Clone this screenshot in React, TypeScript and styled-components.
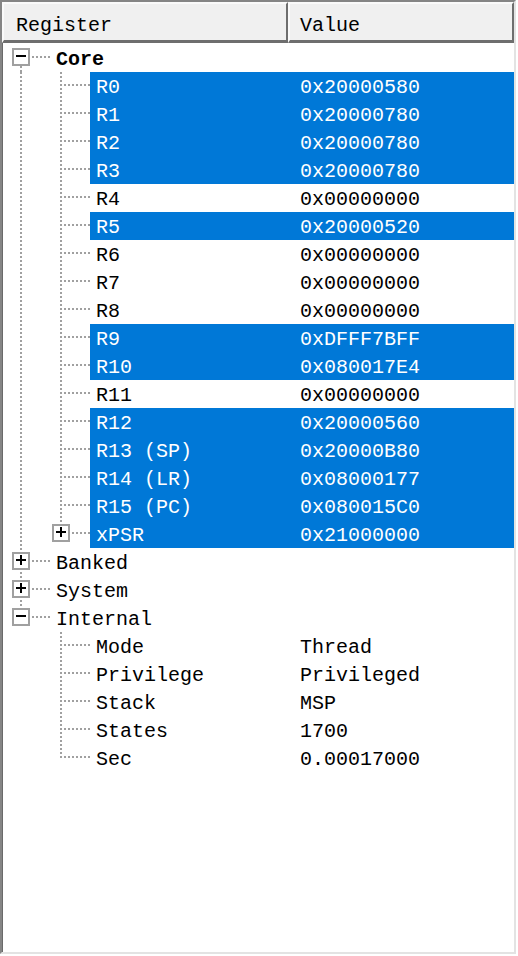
import React from "react";
import styled, { createGlobalStyle, css } from "styled-components";

const GlobalStyle = createGlobalStyle`
  html, body { margin: 0; padding: 0; background: #ffffff; }
  body { font-family: "Liberation Mono", "Noto Sans CJK SC", monospace; }
`;

type Node = {
  name: string;
  value?: string;
  bold?: boolean;
  selected?: boolean;
  expanded?: boolean;
  collapsible?: boolean;
  children?: Node[];
};

const sel = (name: string, value: string): Node => ({ name, value, selected: true });
const reg = (name: string, value: string): Node => ({ name, value });

const TREE: Node[] = [
  {
    name: "Core",
    bold: true,
    expanded: true,
    collapsible: true,
    children: [
      sel("R0", "0x20000580"),
      sel("R1", "0x20000780"),
      sel("R2", "0x20000780"),
      sel("R3", "0x20000780"),
      reg("R4", "0x00000000"),
      sel("R5", "0x20000520"),
      reg("R6", "0x00000000"),
      reg("R7", "0x00000000"),
      reg("R8", "0x00000000"),
      sel("R9", "0xDFFF7BFF"),
      sel("R10", "0x080017E4"),
      reg("R11", "0x00000000"),
      sel("R12", "0x20000560"),
      sel("R13 (SP)", "0x20000B80"),
      sel("R14 (LR)", "0x08000177"),
      sel("R15 (PC)", "0x080015C0"),
      { name: "xPSR", value: "0x21000000", selected: true, collapsible: true },
    ],
  },
  { name: "Banked", collapsible: true },
  { name: "System", collapsible: true },
  {
    name: "Internal",
    expanded: true,
    collapsible: true,
    children: [
      reg("Mode", "Thread"),
      reg("Privilege", "Privileged"),
      reg("Stack", "MSP"),
      reg("States", "1700"),
      reg("Sec", "0.00017000"),
    ],
  },
];

type Flat = {
  node: Node;
  level: number;
  guides: boolean[];
  vline: "full" | "top" | "bottom";
};

function flatten(nodes: Node[], level: number, guides: boolean[], out: Flat[]) {
  nodes.forEach((n, i) => {
    const isLast = i === nodes.length - 1;
    const isFirstRoot = level === 0 && i === 0;
    const vline = isLast ? "top" : isFirstRoot ? "bottom" : "full";
    out.push({ node: n, level, guides, vline });
    if (n.expanded && n.children) {
      flatten(n.children, level + 1, [...guides, !isLast], out);
    }
  });
  return out;
}

const DOT = "#a0a0a0";
const vDots = `repeating-linear-gradient(to bottom, ${DOT} 0 2px, transparent 2px 4px)`;
const hDots = `repeating-linear-gradient(to right, ${DOT} 0 2px, transparent 2px 4px)`;

const Panel = styled.div`
  box-sizing: border-box;
  width: 516px;
  height: 954px;
  border-top: 2px solid #858585;
  border-left: 2px solid #858585;
  border-right: 2px solid #e3e3e3;
  border-bottom: 2px solid #e3e3e3;
  display: flex;
  flex-direction: column;
  background: #ffffff;
  font-size: 20px;
  color: #000000;
`;

const HeaderBar = styled.div`
  display: flex;
  height: 41px;
`;

const HeaderCell = styled.div<{ $w?: number; $pad: number }>`
  box-sizing: border-box;
  ${(p) => (p.$w ? css`width: ${p.$w}px;` : css`flex: 1;`)}
  height: 41px;
  background: #f0f0f0;
  border-top: 2px solid #fafafa;
  border-left: 2px solid #fafafa;
  border-right: 2px solid #6e6e6e;
  border-bottom: 3px solid #6e6e6e;
  padding: 7px 0 0 ${(p) => p.$pad}px;
  line-height: 29px;
  white-space: pre;
`;

const TreeBody = styled.div`
  flex: 1;
  border-left: 1px solid #6a6a6a;
  padding-top: 1px;
  display: flex;
  flex-direction: column;
`;

const Row = styled.div`
  display: flex;
  height: 28px;
`;

const Guide = styled.div<{ $line: boolean }>`
  flex: none;
  width: 40px;
  height: 28px;
  ${(p) =>
    p.$line &&
    css`
      background-image: ${vDots};
      background-size: 2px 28px;
      background-position: 17px 0;
      background-repeat: no-repeat;
    `}
`;

const vSize = { full: "2px 28px", top: "2px 14px", bottom: "2px 14px" };
const vPos = { full: "17px 0", top: "17px 0", bottom: "17px 14px" };

const Connector = styled.div<{ $v: "full" | "top" | "bottom" }>`
  flex: none;
  box-sizing: border-box;
  width: 47px;
  height: 28px;
  padding: 4px 0 0 9px;
  background-image: ${vDots}, ${hDots};
  background-size: ${(p) => vSize[p.$v]}, 30px 2px;
  background-position: ${(p) => vPos[p.$v]}, 17px 12px;
  background-repeat: no-repeat;
`;

const ExpandBox = styled.div`
  box-sizing: border-box;
  width: 18px;
  height: 18px;
  border: 2px solid #a0a0a0;
  background: #ffffff;
  display: flex;
`;

const Item = styled.div<{ $selected?: boolean; $bold?: boolean }>`
  flex: 1;
  display: flex;
  box-sizing: border-box;
  height: 28px;
  padding: 4px 0 0 6px;
  line-height: 24px;
  white-space: pre;
  background: ${(p) => (p.$selected ? "#0078d7" : "transparent")};
  color: ${(p) => (p.$selected ? "#ffffff" : "#000000")};
  font-weight: ${(p) => (p.$bold ? 700 : 400)};
`;

const Name = styled.span<{ $level: number }>`
  flex: none;
  width: ${(p) => 244 - 40 * p.$level}px;
`;

const Value = styled.span`
  flex: none;
`;

function Toggle({ open }: { open: boolean }) {
  return (
    <ExpandBox>
      <svg width="14" height="14" viewBox="0 0 14 14">
        <rect x="2" y="5" width="10" height="2" fill="#000" />
        {!open && <rect x="6" y="1" width="2" height="10" fill="#000" />}
      </svg>
    </ExpandBox>
  );
}

export default function App() {
  const rows = flatten(TREE, 0, [], []);
  return (
    <>
      <GlobalStyle />
      <Panel>
        <HeaderBar>
          <HeaderCell $w={286} $pad={12}>Register</HeaderCell>
          <HeaderCell $pad={10}>Value</HeaderCell>
        </HeaderBar>
        <TreeBody>
          {rows.map((r, idx) => (
            <Row key={idx}>
              {r.guides.map((g, gi) => (
                <Guide key={gi} $line={g} />
              ))}
              <Connector $v={r.vline}>
                {r.node.collapsible && <Toggle open={!!r.node.expanded} />}
              </Connector>
              <Item $selected={r.node.selected} $bold={r.node.bold}>
                <Name $level={r.level}>{r.node.name}</Name>
                {r.node.value && <Value>{r.node.value}</Value>}
              </Item>
            </Row>
          ))}
        </TreeBody>
      </Panel>
    </>
  );
}
